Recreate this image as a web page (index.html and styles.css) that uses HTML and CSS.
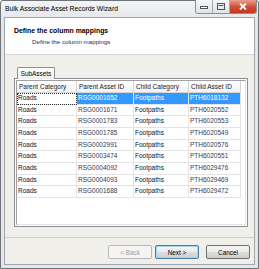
FILE: index.html
```html
<!DOCTYPE html>
<html lang="en">
<head>
    <meta charset="UTF-8">
    <title>Bulk Associate Asset Records Wizard</title>
    <link rel="stylesheet" href="styles.css">
</head>
<body>
    <div class="window">
        <!-- Title bar -->
        <div class="titlebar">
            <span class="title">Bulk Associate Asset Records Wizard</span>
            <div class="caption-buttons">
                <span class="cbtn">
                    <svg width="8" height="5" viewBox="0 0 8 5"><rect x="0.5" y="2.5" width="7" height="2" fill="#fff" stroke="#555" stroke-width="1"/></svg>
                </span>
                <span class="cbtn">
                    <svg width="8" height="7" viewBox="0 0 8 7"><rect x="0.5" y="0.5" width="7" height="6" fill="none" stroke="#555" stroke-width="1"/><rect x="1.5" y="2" width="5" height="1" fill="#555"/></svg>
                </span>
                <span class="cbtn close">
                    <svg width="8" height="7" viewBox="0 0 8 7"><path d="M1 0.5 L7 6.5 M7 0.5 L1 6.5" stroke="#fff" stroke-width="1.8"/></svg>
                </span>
            </div>
        </div>

        <div class="client">
            <!-- Wizard header -->
            <div class="header">
                <div class="header-title">Define the column mappings</div>
                <div class="header-sub">Define the column mappings</div>
            </div>

            <!-- Tab with grid -->
            <div class="body">
                <div class="tabs"><span class="tab">SubAssets</span></div>
                <div class="tab-page">
                    <div class="grid">
                        <div class="hcell">Parent Category</div>
                        <div class="hcell">Parent Asset ID</div>
                        <div class="hcell">Child Category</div>
                        <div class="hcell">Child Asset ID</div>
                        <div class="hcell filler"></div>

                        <div class="cell focus">Roads</div>
                        <div class="cell id sel">RSG0001652</div>
                        <div class="cell sel">Footpaths</div>
                        <div class="cell id sel">PTH6018132</div>
                        <div class="filler"></div>

                        <div class="cell">Roads</div><div class="cell id">RSG0001671</div><div class="cell">Footpaths</div><div class="cell id">PTH6020552</div><div class="filler"></div>
                        <div class="cell">Roads</div><div class="cell id">RSG0001783</div><div class="cell">Footpaths</div><div class="cell id">PTH6020553</div><div class="filler"></div>
                        <div class="cell">Roads</div><div class="cell id">RSG0001785</div><div class="cell">Footpaths</div><div class="cell id">PTH6020549</div><div class="filler"></div>
                        <div class="cell">Roads</div><div class="cell id">RSG0002991</div><div class="cell">Footpaths</div><div class="cell id">PTH6020576</div><div class="filler"></div>
                        <div class="cell">Roads</div><div class="cell id">RSG0003474</div><div class="cell">Footpaths</div><div class="cell id">PTH6020551</div><div class="filler"></div>
                        <div class="cell">Roads</div><div class="cell id">RSG0004092</div><div class="cell">Footpaths</div><div class="cell id">PTH6029476</div><div class="filler"></div>
                        <div class="cell">Roads</div><div class="cell id">RSG0004093</div><div class="cell">Footpaths</div><div class="cell id">PTH6029469</div><div class="filler"></div>
                        <div class="cell">Roads</div><div class="cell id">RSG0001688</div><div class="cell">Footpaths</div><div class="cell id">PTH6029472</div><div class="filler"></div>
                    </div>
                </div>
            </div>

            <!-- Wizard buttons -->
            <div class="footer">
                <button class="btn" disabled>&lt; Back</button>
                <button class="btn default">Next &gt;</button>
                <button class="btn cancel">Cancel</button>
            </div>
        </div>
    </div>
</body>
</html>
```

FILE: styles.css
```css
* {
    box-sizing: border-box;
}
body {
    margin: 0;
    font-family: "Liberation Sans", Arial, sans-serif;
    background: #ffffff;
}
.window {
    width: 259px;
    height: 269px;
    border: 1px solid #6e7378;
    border-radius: 3px 3px 0 0;
    background: linear-gradient(#f3f4f6, #e2e5e9 20px, #e4e6ea);
    padding: 0 3px 3px 3px;
    display: flex;
    flex-direction: column;
}
.titlebar {
    height: 16px;
    display: flex;
    align-items: flex-start;
    justify-content: space-between;
}
.title {
    font-size: 6.8px;
    color: #000;
    margin: 4px 0 0 1px;
}
.caption-buttons {
    display: flex;
    margin-right: -2px;
    margin-top: -1px;
    border: 1px solid #8b8f95;
    border-top: none;
    border-radius: 0 0 3px 3px;
    overflow: hidden;
}
.cbtn {
    width: 17px;
    height: 13px;
    display: flex;
    align-items: center;
    justify-content: center;
    background: linear-gradient(#f6f7f8, #dfe2e6);
    border-right: 1px solid #a6aab0;
}
.cbtn.close {
    width: 26px;
    border-right: none;
    background: linear-gradient(#e8a08c, #cf4b32 55%, #c2391f);
}
.client {
    flex: 1;
    border: 1px solid #a3a7ad;
    background: #f0efea;
    display: flex;
    flex-direction: column;
}
.header {
    height: 37px;
    background: #ffffff;
    border-bottom: 1px solid #d7d4cc;
    padding: 9px 0 0 9px;
}
.header-title {
    font-size: 6.9px;
    font-weight: bold;
    color: #000;
    line-height: 8px;
}
.header-sub {
    font-size: 6.2px;
    color: #1e2a5e;
    margin: 3px 0 0 18px;
    line-height: 7px;
}
.body {
    height: 183px;
    padding: 12px 6px 0 9px;
    border-bottom: 1px solid #d3d0c8;
}
.tabs {
    height: 11px;
    padding-left: 3px;
    display: flex;
}
.tab {
    width: 38px;
    height: 12px;
    border: 1px solid #8c9096;
    border-bottom: none;
    border-radius: 2px 2px 0 0;
    background: linear-gradient(#ffffff, #f0f0f0);
    font-size: 6.4px;
    color: #000;
    text-align: center;
    line-height: 11px;
    position: relative;
    z-index: 1;
}
.tab-page {
    height: 149px;
    border: 1px solid #8c9096;
    background: #fcfcfc;
    padding: 1px;
}
.grid {
    height: 100%;
    background: #ffffff;
    border: 1px solid #a0a0a0;
    border-right-color: #e3e3e3;
    border-bottom-color: #e3e3e3;
    display: grid;
    grid-template-columns: 60px 57px 55px 52px 1fr;
    grid-template-rows: 12px;
    grid-auto-rows: 11.67px;
    align-content: start;
    font-size: 6.5px;
}
.hcell {
    background: linear-gradient(#ffffff, #f1f2f4);
    border-right: 1px solid #d5d5d5;
    border-bottom: 1px solid #d5d5d5;
    color: #1b1b1b;
    padding-left: 2px;
    line-height: 11px;
    white-space: nowrap;
}
.hcell.filler {
    border-right: none;
    background: #ffffff;
    border-bottom: none;
}
.cell {
    border-right: 1px solid #e4e4e4;
    border-bottom: 1px solid #e4e4e4;
    color: #0b1030;
    padding-left: 1px;
    line-height: 10.5px;
    white-space: nowrap;
}
.cell.id {
    color: #333a55;
}
.cell.sel {
    background: #3399ff;
    color: #ffffff;
}
.cell.focus {
    outline: 1px dotted #333;
    outline-offset: -1px;
}
.filler {
    background: #ffffff;
}
.footer {
    flex: 1;
    display: flex;
    justify-content: flex-end;
    align-items: flex-start;
    padding: 7px 4px 0 0;
}
.btn {
    width: 44px;
    height: 14px;
    margin-left: 3px;
    padding: 0;
    font-family: "Liberation Sans", Arial, sans-serif;
    font-size: 6.4px;
    color: #000;
    border: 1px solid #707070;
    border-radius: 2px;
    background: linear-gradient(#f3f3f3, #ebebeb 50%, #dddddd 51%, #cfcfcf);
}
.btn:disabled {
    color: #a0a0a0;
    border-color: #b5b8bb;
    background: #f4f4f4;
}
.btn.default {
    border-color: #3c7fb1;
    box-shadow: inset 0 0 0 1px #a6d8f4;
}
.btn.cancel {
    margin-left: 7px;
}
```
